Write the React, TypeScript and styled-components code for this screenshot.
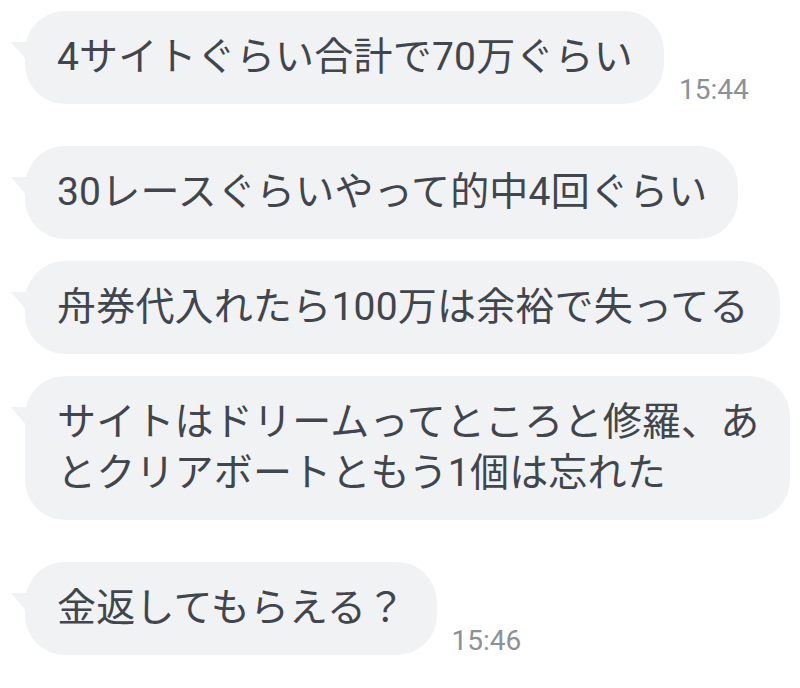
import * as React from "react";
import styled, { createGlobalStyle } from "styled-components";

const GlobalStyle = createGlobalStyle`
  html, body {
    margin: 0;
    padding: 0;
    background: #ffffff;
  }
  body {
    font-family: "Roboto", "Noto Sans CJK JP", sans-serif;
  }
`;

const Chat = styled.div`
  width: 800px;
  height: 688px;
  box-sizing: border-box;
  padding: 11px 0 0 25px;
  display: flex;
  flex-direction: column;
  gap: 42px;
  overflow: hidden;
`;

const Group = styled.div`
  display: flex;
  flex-direction: column;
  gap: 22px;
`;

const Row = styled.div`
  display: flex;
  align-items: flex-end;
  gap: 15px;
`;

const Bubble = styled.div`
  position: relative;
  background: #f1f2f4;
  border-radius: 40px;
  padding: 21px 31px 21px 32px;
  color: #41454c;
  font-family: "Roboto", "Noto Sans CJK JP", sans-serif;
  font-size: 39px;
  line-height: 51px;
  letter-spacing: 0.2px;
  white-space: nowrap;

  &::before {
    content: "";
    position: absolute;
    left: -14px;
    top: 31px;
    width: 22px;
    height: 26px;
    background: #f1f2f4;
    clip-path: polygon(0 0, 100% 0, 100% 100%);
  }
`;

const Time = styled.span`
  font-family: "Roboto", sans-serif;
  font-size: 28px;
  line-height: 1;
  color: #8c9097;
  white-space: nowrap;
`;

type Message = { lines: string[]; time?: string };

const groups: Message[][] = [
  [{ lines: ["4サイトぐらい合計で70万ぐらい"], time: "15:44" }],
  [
    { lines: ["30レースぐらいやって的中4回ぐらい"] },
    { lines: ["舟券代入れたら100万は余裕で失ってる"] },
    { lines: ["サイトはドリームってところと修羅、あ", "とクリアボートともう1個は忘れた"] },
  ],
  [{ lines: ["金返してもらえる？"], time: "15:46" }],
];

export default function App() {
  return (
    <>
      <GlobalStyle />
      <Chat>
        {groups.map((group, gi) => (
          <Group key={gi}>
            {group.map((msg, mi) => (
              <Row key={mi}>
                <Bubble>
                  {msg.lines.map((line, li) => (
                    <React.Fragment key={li}>
                      {li > 0 && <br />}
                      {line}
                    </React.Fragment>
                  ))}
                </Bubble>
                {msg.time && <Time>{msg.time}</Time>}
              </Row>
            ))}
          </Group>
        ))}
      </Chat>
    </>
  );
}
